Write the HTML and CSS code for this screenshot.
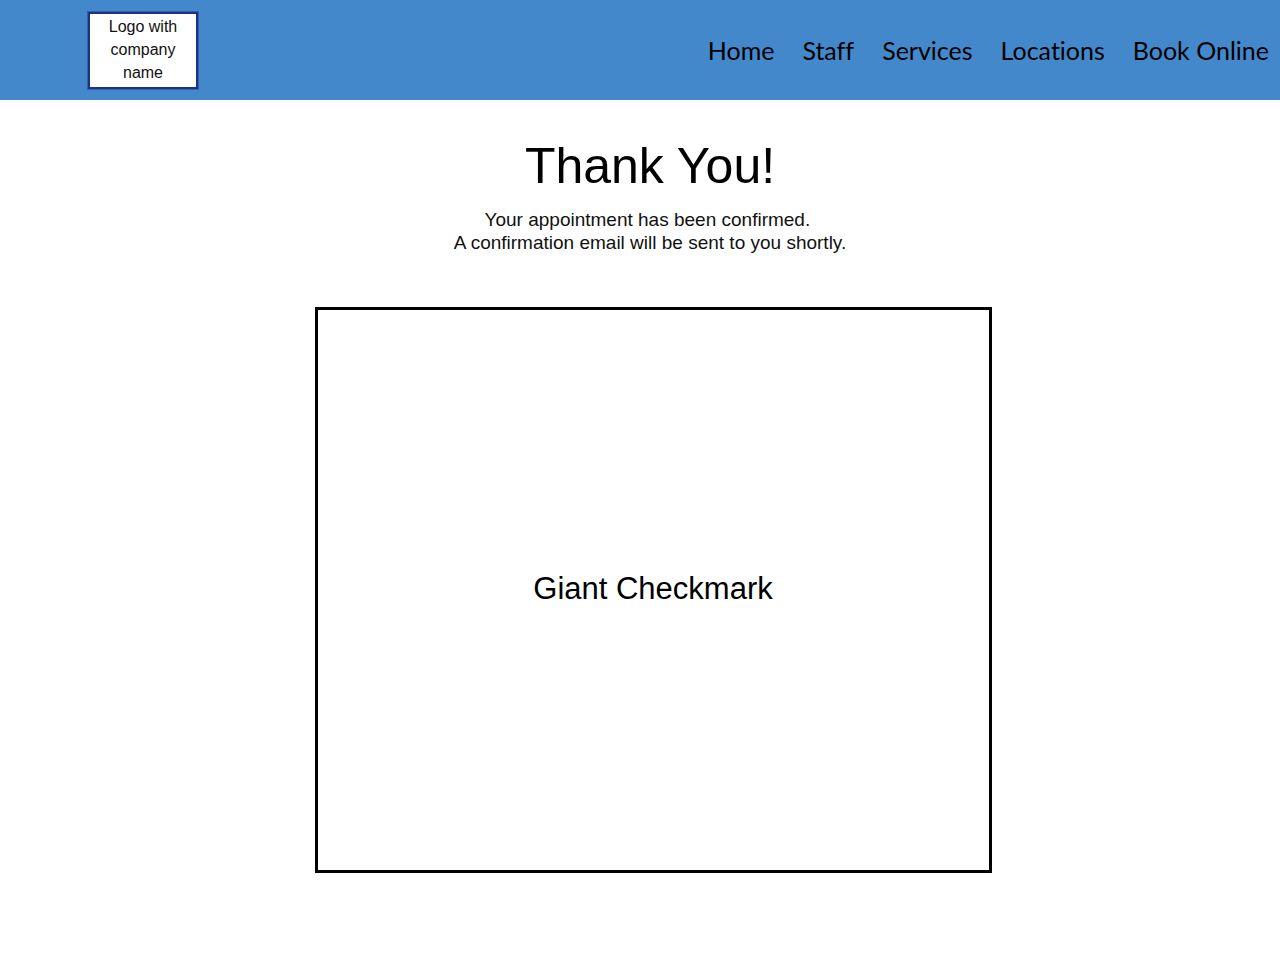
FILE: index.html
```html
<!DOCTYPE html>
<html lang="en">
<head>
<meta charset="utf-8">
<meta name="viewport" content="width=device-width, initial-scale=1">
<title>Appointment confirmed</title>
<link rel="stylesheet" href="styles.css">
</head>
<body>
<header class="site-header">
  <div class="logo">Logo with company name</div>
  <nav class="site-nav">
    <a href="#home">Home</a>
    <a href="#staff">Staff</a>
    <a href="#services">Services</a>
    <a href="#locations">Locations</a>
    <a href="#book">Book Online</a>
  </nav>
</header>
<main class="confirmation">
  <div class="intro">
    <h1 class="title">Thank You!</h1>
    <p class="message">Your appointment has been confirmed.&nbsp;<br>A confirmation email will be sent to you shortly.</p>
  </div>
  <div class="checkmark">Giant Checkmark</div>
</main>
</body>
</html>
```

FILE: styles.css
```css
* {
  box-sizing: border-box;
}

body {
  margin: 0;
  background: #fff;
  color: #000;
  font-family: "Liberation Sans", Arial, sans-serif;
}

.site-header {
  display: flex;
  align-items: center;
  justify-content: space-between;
  min-height: 100px;
  padding: 1px 11px 0 87px;
  background: #4488cc;
}

.logo {
  width: 112px;
  padding: 1px 12px 3px;
  border: 3px solid #1b3384;
  outline: 1px solid #3360aa;
  outline-offset: -1px;
  background: #fff;
  color: #111;
  font-size: 16px;
  line-height: 23px;
  text-align: center;
}

.site-nav {
  display: flex;
  flex-wrap: wrap;
  gap: 0 28px;
  padding-bottom: 2px;
  font-family: Lato, sans-serif;
  font-size: 25px;
  font-variant-ligatures: none;
  line-height: 32px;
}

.site-nav a {
  color: inherit;
  text-decoration: none;
}

.confirmation {
  display: flex;
  flex-direction: column;
  align-items: center;
  padding: 36px 20px 88px 46px;
}

.intro {
  padding-right: 6px;
  text-align: center;
}

.title {
  margin: 0;
  font-size: 50px;
  line-height: 60px;
  font-weight: 400;
}

.message {
  margin: 12px 0 0;
  color: #111;
  font-size: 19px;
  line-height: 23px;
}

.checkmark {
  display: grid;
  place-items: center;
  width: 100%;
  max-width: 677px;
  aspect-ratio: 677 / 566;
  margin-top: 53px;
  padding-bottom: 2px;
  border: 3px solid #000;
  font-size: 31px;
}
```
